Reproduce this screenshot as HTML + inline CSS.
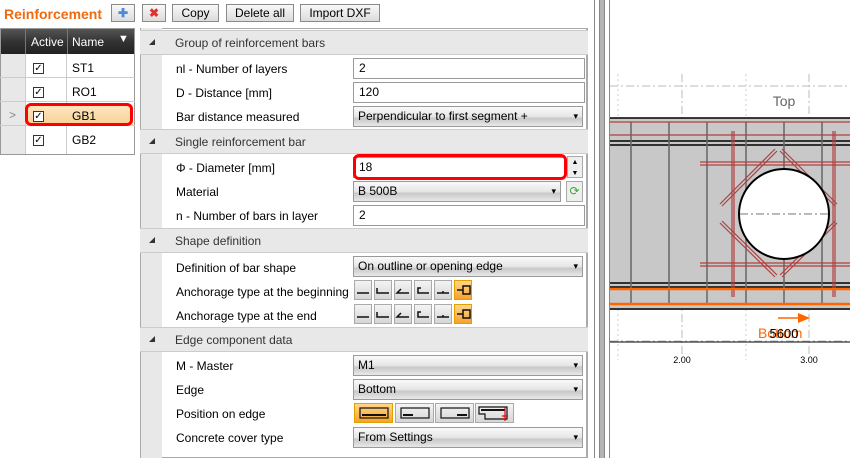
<!DOCTYPE html><html><head><style>
body{margin:0;width:850px;height:458px;background:#fff;font-family:"Liberation Sans",sans-serif;font-size:12px;color:#000;position:relative;overflow:hidden}
.a{position:absolute}
.btn{position:absolute;top:4px;height:18px;border:1px solid #8a8a8a;background:linear-gradient(#f8f8f8,#dcdcdc);font-size:12px;line-height:16px;text-align:center;box-sizing:border-box}
.grp{position:absolute;left:140px;width:448px;height:25px;background:#e8e8e8;border-top:1px solid #ccc;border-bottom:1px solid #ccc;box-sizing:border-box}
.grp span{position:absolute;left:35px;top:5px;color:#333}
.grp i{position:absolute;left:9px;top:8px;width:0;height:0;border-left:6px solid transparent;border-bottom:6px solid #333}
.lbl{position:absolute;left:176px}
.inp{position:absolute;left:353px;width:232px;height:21px;border:1px solid #9a9a9a;box-sizing:border-box;padding-left:5px;line-height:19px;background:#fff}
.dd{position:absolute;left:353px;width:230px;height:21px;border:1px solid #9a9a9a;box-sizing:border-box;padding-left:4px;line-height:19px;background:linear-gradient(#fafafa,#e6e6e6 50%,#c8c8c8 60%,#e8e8e8)}
.dd:after{content:"▾";position:absolute;right:4px;top:0;font-size:9px}
.ic{position:absolute;width:18px;height:20px;border:1px solid #aaa;box-sizing:border-box;background:linear-gradient(#f4f4f4,#d6d6d6)}
.ic.s{background:linear-gradient(#ffd68a,#f7a22b);border-color:#e0a000}
.row{position:absolute;left:0;width:135px;height:23px;border-bottom:1px solid #ccc}
.cb{position:absolute;left:33px;width:11px;height:11px;border:1px solid #333;box-sizing:border-box;background:#fff;font-size:10px;line-height:9px;text-align:center}
</style></head><body>
<div class="a" style="left:4px;top:6px;color:#f06a0f;font-weight:bold;font-size:14px">Reinforcement</div>
<div class="btn" style="left:111px;width:24px;color:#4a8ad8;font-weight:bold">✚</div>
<div class="btn" style="left:142px;width:24px;color:#e03030;font-weight:bold">✖</div>
<div class="btn" style="left:172px;width:47px">Copy</div>
<div class="btn" style="left:226px;width:68px">Delete all</div>
<div class="btn" style="left:300px;width:80px">Import DXF</div>
<div class="a" style="left:0;top:28px;width:135px;height:127px;border:1px solid #999;box-sizing:border-box"></div>
<div class="a" style="left:1px;top:29px;width:133px;height:25px;background:linear-gradient(#555,#333 50%,#222)"></div>
<div class="a" style="left:25px;top:29px;width:1px;height:25px;background:#777"></div>
<div class="a" style="left:67px;top:29px;width:1px;height:25px;background:#777"></div>
<div class="a" style="left:31px;top:35px;color:#fff">Active</div>
<div class="a" style="left:72px;top:35px;color:#fff">Name</div>
<div class="a" style="left:118px;top:33px;color:#fff;font-size:11px">▼</div>
<div class="a" style="left:1px;top:54px;width:24px;height:100px;background:#e8e8e8"></div>
<div class="a" style="left:25px;top:54px;width:1px;height:100px;background:#ccc"></div>
<div class="a" style="left:66px;top:54px;width:1px;height:100px;background:#ccc"></div>
<div class="row" style="top:54px"></div><div class="row" style="top:78px"></div><div class="row" style="top:102px"></div>
<div class="a" style="left:27px;top:105px;width:106px;height:21px;background:linear-gradient(#fde8c4,#f8cf90)"></div>
<div class="a" style="left:9px;top:108px;color:#888">&gt;</div>
<div class="a" style="left:72px;top:61px">ST1</div><div class="a" style="left:72px;top:85px">RO1</div><div class="a" style="left:72px;top:109px">GB1</div><div class="a" style="left:72px;top:133px">GB2</div>
<div class="cb" style="top:63px">✓</div><div class="cb" style="top:87px">✓</div><div class="cb" style="top:111px">✓</div><div class="cb" style="top:135px">✓</div>
<div class="a" style="left:25px;top:103px;width:108px;height:23px;border:3px solid #f00;border-radius:6px;box-sizing:border-box"></div>
<div class="a" style="left:140px;top:28px;width:448px;height:430px;border:1px solid #aaa;border-right:2px solid #aaa;box-sizing:border-box"></div>
<div class="a" style="left:141px;top:28px;width:21px;height:430px;background:#e8e8e8"></div>
<div class="grp" style="top:30px"><i></i><span>Group of reinforcement bars</span></div>
<div class="grp" style="top:129px"><i></i><span>Single reinforcement bar</span></div>
<div class="grp" style="top:228px"><i></i><span>Shape definition</span></div>
<div class="grp" style="top:327px"><i></i><span>Edge component data</span></div>
<div class="lbl" style="top:62px">nl - Number of layers</div><div class="inp" style="top:58px">2</div>
<div class="lbl" style="top:86px">D - Distance [mm]</div><div class="inp" style="top:82px">120</div>
<div class="lbl" style="top:110px">Bar distance measured</div><div class="dd" style="top:106px">Perpendicular to first segment +</div>
<div class="lbl" style="top:161px">Φ - Diameter [mm]</div><div class="inp" style="top:157px;width:212px">18</div>
<div class="a" style="left:567px;top:156px;width:16px;height:22px;font-size:7px;line-height:11px;text-align:center;background:#eee;border:1px solid #aaa;box-sizing:border-box">▲<br>▼</div>
<div class="a" style="left:353px;top:154px;width:214px;height:26px;border:3px solid #f00;border-radius:6px;box-sizing:border-box"></div>
<div class="lbl" style="top:185px">Material</div><div class="dd" style="top:181px;width:208px">B 500B</div>
<div class="a" style="left:566px;top:181px;width:17px;height:21px;border:1px solid #aaa;box-sizing:border-box;background:#eee;color:#3a3;text-align:center;line-height:19px">⟳</div>
<div class="lbl" style="top:209px">n - Number of bars in layer</div><div class="inp" style="top:205px">2</div>
<div class="lbl" style="top:261px">Definition of bar shape</div><div class="dd" style="top:256px">On outline or opening edge</div>
<div class="lbl" style="top:285px">Anchorage type at the beginning</div><div class="lbl" style="top:309px">Anchorage type at the end</div>
<div class="ic" style="left:354px;top:280px"></div><div class="ic" style="left:374px;top:280px"></div><div class="ic" style="left:394px;top:280px"></div><div class="ic" style="left:414px;top:280px"></div><div class="ic" style="left:434px;top:280px"></div><div class="ic s" style="left:454px;top:280px"></div>
<div class="ic" style="left:354px;top:304px"></div><div class="ic" style="left:374px;top:304px"></div><div class="ic" style="left:394px;top:304px"></div><div class="ic" style="left:414px;top:304px"></div><div class="ic" style="left:434px;top:304px"></div><div class="ic s" style="left:454px;top:304px"></div>
<svg class="a" style="left:354px;top:280px" width="120" height="44" fill="none" stroke="#111" stroke-width="1.5">
<g id="g"><path d="M3 13h12"/><path d="M23 8v5h12"/><path d="M47 9l-4 4h12"/><path d="M67 8h-3v5h11"/><path d="M83 13h12M89 11v2"/><path d="M103 10h6M109 6h7v8h-7z"/></g>
<use href="#g" y="24"/></svg>
<div class="lbl" style="top:359px">M - Master</div><div class="dd" style="top:355px">M1</div>
<div class="lbl" style="top:383px">Edge</div><div class="dd" style="top:379px">Bottom</div>
<div class="lbl" style="top:407px">Position on edge</div>
<div class="ic s" style="left:354px;top:403px;width:39px"></div><div class="ic" style="left:395px;top:403px;width:39px"></div><div class="ic" style="left:435px;top:403px;width:39px"></div><div class="ic" style="left:475px;top:403px;width:39px"></div>
<svg class="a" style="left:354px;top:403px" width="160" height="20" fill="none" stroke="#111" stroke-width="1.2">
<rect x="6" y="5" width="28" height="10"/><path d="M8 12h24" stroke-width="2"/>
<rect x="47" y="5" width="28" height="10"/><path d="M49 12h10" stroke-width="2"/>
<rect x="87" y="5" width="28" height="10"/><path d="M103 12h10" stroke-width="2"/>
<path d="M125 4h28v12h-22v-5h-6z"/><path d="M127 7h24" stroke-width="2"/><path d="M151 4v14M148 13h6" stroke="#e00"/></svg>
<div class="lbl" style="top:431px">Concrete cover type</div><div class="dd" style="top:427px">From Settings</div>
<div class="a" style="left:594px;top:0;width:1px;height:458px;background:#888"></div>
<div class="a" style="left:599px;top:0;width:6px;height:458px;background:#b4b4b4;border-left:1px solid #888;border-right:1px solid #888;box-sizing:border-box"></div>
<div class="a" style="left:609px;top:0;width:1px;height:458px;background:#888"></div>
<svg class="a" style="left:610px;top:0" width="240" height="458">
<g stroke="#bbb" stroke-dasharray="8 3 2 3" stroke-width="1"><path d="M0 86H240M0 341H240"/><path d="M72 74V360M199 74V360"/></g>
<g stroke="#ccc" stroke-dasharray="2 3"><path d="M8 74V360M136 74V360"/></g>
<text x="174" y="106" font-family="Liberation Sans" font-size="14" fill="#666" text-anchor="middle">Top</text>
<rect x="0" y="118" width="240" height="192" fill="#c8c8c8"/>
<g stroke="#000" stroke-width="1.5"><path d="M0 118H240M0 141H240M0 145H240M0 283H240M0 287H240M0 309H240"/></g>
<g stroke="#666" stroke-width="1.5"><path d="M21 122V304M59 122V304M97 122V304M136 122V304M174 122V304M212 122V304"/></g>
<g stroke="#b04040" stroke-width="1.2"><path d="M0 122H240M0 135H240M90 162H240M90 165H240M90 263H240M90 266H240M122 131V297M124 131V297M223 131V297M225 131V297"/>
<path d="M110 204L165 149M112 206L167 151M172 149L227 204M170 151L225 206M110 223L165 277M112 221L167 275M172 277L227 223M170 275L225 221"/></g>
<circle cx="174" cy="214" r="45" fill="#fff" stroke="#000" stroke-width="2"/>
<path d="M130 214H218" stroke="#777" stroke-dasharray="8 3 2 3"/>
<g stroke="#f60" stroke-width="2.5"><path d="M0 289H240M0 304H240"/></g>
<path d="M168 318H195" stroke="#f60" stroke-width="1.5"/><path d="M188 313L200 318L188 323Z" fill="#f60"/>
<text x="148" y="338" font-family="Liberation Sans" font-size="14" fill="#f60">Bottom</text>
<text x="174" y="338" font-family="Liberation Sans" font-size="13" fill="#000" text-anchor="middle">5600</text>
<path d="M0 342H240" stroke="#000"/>
<text x="72" y="363" font-family="Liberation Sans" font-size="9" text-anchor="middle">2.00</text>
<text x="199" y="363" font-family="Liberation Sans" font-size="9" text-anchor="middle">3.00</text>
</svg>
</body></html>
